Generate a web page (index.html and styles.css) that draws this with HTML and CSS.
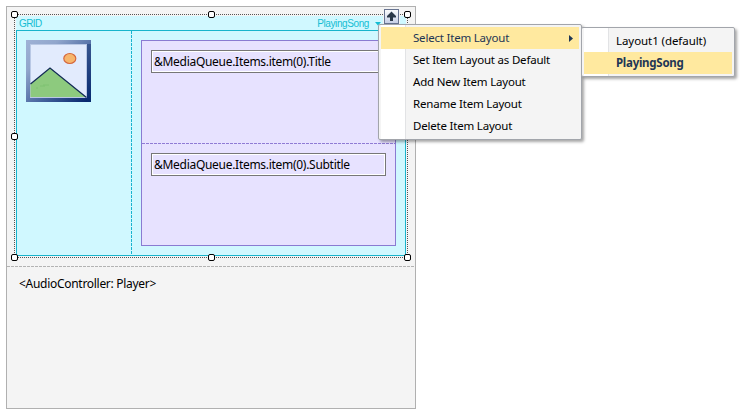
FILE: index.html
```html
<!DOCTYPE html>
<html lang="en">
<head>
<meta charset="utf-8">
<title>Layout editor</title>
<link rel="stylesheet" href="styles.css">
</head>
<body>
<main class="form">
  <section class="selection">
    <svg class="outline" width="394" height="244" shape-rendering="crispEdges"><path d="M0 .5H394M0 243.5H394M.5 0V244M393.5 0V244"/></svg>
    <div class="grid">
      <header class="grid-head"><span>GRID</span><span class="layout-name">PlayingSong<svg width="6" height="4"><path d="M0 0H6L3 3.5Z"/></svg></span></header>
      <div class="grid-body">
        <div class="image-cell">
          <svg width="65" height="62" viewBox="0 0 65 62">
            <defs>
              <linearGradient id="frame" x1="0" y1="0" x2="1" y2="1"><stop offset="0" stop-color="#9fb2d6"/><stop offset=".25" stop-color="#91a6cc"/><stop offset=".6" stop-color="#47659f"/><stop offset="1" stop-color="#002068"/></linearGradient>
              <linearGradient id="side" x1="0" y1="0" x2="0" y2="1"><stop offset="0" stop-color="#38568f"/><stop offset="1" stop-color="#06296f"/></linearGradient>
            </defs>
            <path fill="url(#frame)" d="M0 0H65V62H0Z"/>
            <path fill="url(#side)" d="M61 4H65V62H61Z"/>
            <path fill="#b9c8e5" d="M4 4H61V58H4Z"/>
            <path fill="#e2ebfd" d="M5 5H60V57H5Z"/>
            <path fill="#8dca7e" d="M4.500 44L24 28L60 57H4.500Z"/>
            <path fill="none" stroke="#132b56" stroke-width="1.300" d="M4.500 44L24 28L60.500 57.500"/>
            <path fill="none" stroke="#7bc06e" stroke-width=".8" d="M10 48h2M14 46h5M17 45h6"/>
            <ellipse cx="43.800" cy="18.500" rx="6" ry="5" fill="#f6b66d" stroke="#d5673c" stroke-width="1.200"/>
          </svg>
        </div>
        <div class="table">
          <div class="cell"><div class="field">&amp;MediaQueue.Items.item(0).Title</div></div>
          <div class="cell"><div class="field">&amp;MediaQueue.Items.item(0).Subtitle</div></div>
        </div>
      </div>
    </div>
    <i class="handle t l"></i><i class="handle t c"></i><i class="handle t r"></i>
    <i class="handle m l"></i><i class="handle m r"></i>
    <i class="handle b l"></i><i class="handle b c"></i><i class="handle b r"></i>
    <div class="up"><svg width="15" height="15"><path fill="#2b3849" d="M7.500 2.500L12 7V8.500H9V12H6V8.500H3V7Z"/></svg></div>
  </section>
  <section class="player"><span>&lt;AudioController: Player&gt;</span></section>
</main>
<nav class="menu main-menu">
  <div class="item active"><span>Select Item Layout</span><svg width="4" height="7"><path d="M0 0L4 3.500L0 7Z"/></svg></div>
  <div class="item"><span>Set Item Layout as Default</span></div>
  <div class="item"><span>Add New Item Layout</span></div>
  <div class="item"><span>Rename Item Layout</span></div>
  <div class="item"><span>Delete Item Layout</span></div>
</nav>
<nav class="menu sub-menu">
  <div class="item"><span>Layout1 (default)</span></div>
  <div class="item active bold"><span>PlayingSong</span></div>
</nav>
</body>
</html>
```
FILE: styles.css
```css
* { box-sizing: border-box; }
body {
  margin: 0;
  padding: 6px;
  height: 414px;
  overflow: hidden;
  background: #fff;
  color: #000;
  font: 12px/16px "Noto Sans", "Open Sans", sans-serif;
  letter-spacing: -.29px;
  white-space: nowrap;
}
svg { display: block; }
.form {
  width: 410px;
  height: 403px;
  padding-top: 7px;
  border: 1px solid #b0b0b0;
  background: #f4f4f4;
}
.selection {
  position: relative;
  width: 394px;
  height: 244px;
  margin-left: 7px;
  padding: 2px;
}
.outline {
  position: absolute;
  inset: 0;
  fill: none;
  stroke: #555;
  stroke-dasharray: 1 1;
}
.grid { height: 240px; background: #d0f8ff; }
.grid-head {
  display: flex;
  justify-content: space-between;
  height: 14px;
  padding: 0 25px 0 3px;
  color: #14bdd3;
  font: 10px/16px "Liberation Sans", sans-serif;
  letter-spacing: -.4px;
}
.layout-name { display: flex; gap: 6px; }
.grid-head > span:first-child { letter-spacing: -.6px; }
.layout-name svg { margin-top: 6px; fill: #14bdd3; }
.grid-body {
  display: flex;
  height: 226px;
  border: 1px solid #18b4cc;
}
.image-cell {
  width: 115px;
  padding: 9px;
  background: repeating-linear-gradient(#18b4d0 0 3px, transparent 3px 4px) right / 1px 100% no-repeat;
}
.table {
  width: 255px;
  height: 206px;
  margin: 9px;
  border: 1px solid #8a7bd2;
  background: #e7e2ff;
}
.cell { height: 102px; padding: 9px; }
.cell + .cell {
  padding-top: 10px;
  background: repeating-linear-gradient(90deg, #8f7bd5 0 3px, transparent 3px 4px) top / 100% 1px no-repeat;
}
.field {
  width: 235px;
  height: 23px;
  padding-left: 2px;
  border: 1px solid #777;
  box-shadow: inset 0 0 0 1px #fff;
  line-height: 21px;
}
.handle {
  position: absolute;
  width: 7px;
  height: 7px;
  border: 1px solid #000;
  border-radius: 2px;
  background: #fff;
}
.t { top: -3px; }
.m { top: 119px; }
.b { bottom: -3px; }
.l { left: -3px; }
.c { left: 194px; }
.r { right: -3px; }
.up {
  position: absolute;
  left: 370px;
  top: -5px;
  width: 15px;
  height: 15px;
  outline: 1px solid #f4f4f4;
  background: linear-gradient(#fff, #c3cce5);
  box-shadow: inset 0 0 0 1px #687491;
}
.player {
  height: 142px;
  margin-top: 8px;
  padding: 10px 12px;
  background: repeating-linear-gradient(90deg, #b3b3b3 0 3px, transparent 3px 4px) top / 100% 1px no-repeat;
}
.menu {
  position: absolute;
  padding: 2px;
  border: 1px solid #a2a5ab;
  border-radius: 2px;
  background: linear-gradient(90deg, #fff 24px, #e2e3e5 24px 25px, #f4f4f4 25px) 2px 0 no-repeat #f4f4f4;
  box-shadow: 2px 2px 3px rgba(0, 0, 0, .35);
  font-size: 11.5px;
  letter-spacing: -.2px;
}
.main-menu { left: 378px; top: 24px; width: 204px; height: 116px; }
.sub-menu { left: 581px; top: 27px; width: 154px; height: 50px; letter-spacing: -.07px; }
.item {
  display: flex;
  align-items: center;
  justify-content: space-between;
  height: 22px;
  padding: 0 6px 0 32px;
}
.item.active { background: #ffe99f; color: #1e3655; }
.item svg { fill: #1e3655; }
.item.bold { font-weight: bold; letter-spacing: -.27px; }
```
